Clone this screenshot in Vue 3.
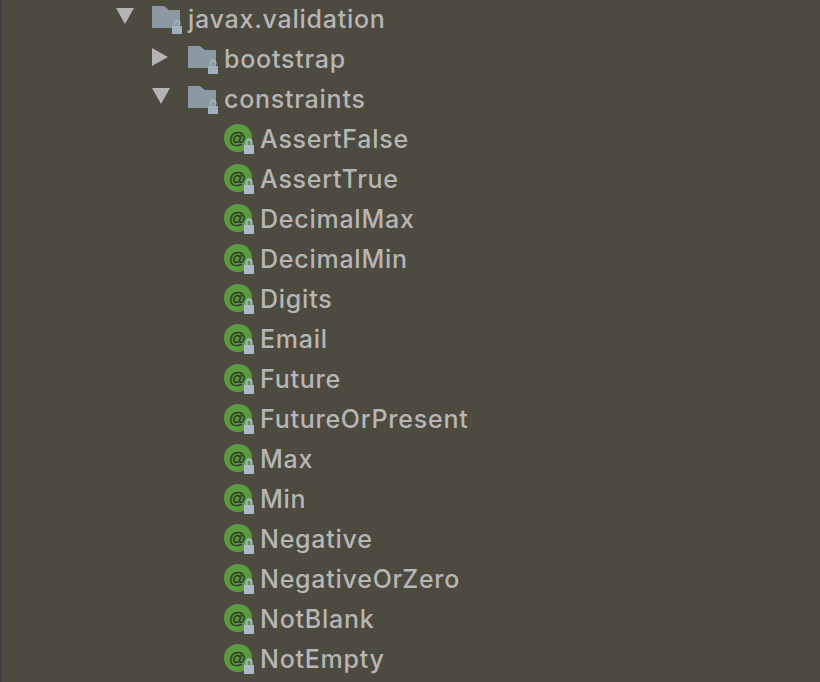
<template>
  <div class="tree">
    <div v-for="row in rows" :key="row.name" class="row" :class="`depth-${row.depth}`">
      <span v-if="row.arrow" class="arrow" :class="row.arrow"></span>
      <span v-if="row.folder" class="icon">
        <svg width="32" height="32" viewBox="0 0 32 32">
          <path d="M0 2h12l5 4h11v18H0z" fill="#8c99a2" />
          <path d="M22.5 21v-2a2.5 2.5 0 0 1 5 0v2" fill="none" stroke="#9fb0bd" stroke-width="2" />
          <rect x="20" y="22" width="10" height="8" fill="#9fb0bd" />
        </svg>
      </span>
      <span v-else class="icon">
        <svg width="32" height="32" viewBox="0 0 32 32">
          <circle cx="14" cy="14" r="14" fill="#5c9a3e" />
          <text x="13.5" y="19.5" text-anchor="middle" class="at">@</text>
          <path d="M22.5 21v-3a2.5 2.5 0 0 1 5 0v3" fill="none" stroke="#a9b9c6" stroke-width="2" />
          <rect x="20" y="21" width="10" height="9" fill="#a9b9c6" />
        </svg>
      </span>
      <span class="label">{{ row.name }}</span>
    </div>
  </div>
</template>

<script setup>
const annotations = [
  'AssertFalse', 'AssertTrue', 'DecimalMax', 'DecimalMin', 'Digits', 'Email', 'Future',
  'FutureOrPresent', 'Max', 'Min', 'Negative', 'NegativeOrZero', 'NotBlank', 'NotEmpty'
]

const rows = [
  { name: 'javax.validation', depth: 0, arrow: 'down', folder: true },
  { name: 'bootstrap', depth: 1, arrow: 'right', folder: true },
  { name: 'constraints', depth: 1, arrow: 'down', folder: true },
  ...annotations.map((name) => ({ name, depth: 2 }))
]
</script>

<style>
html,
body {
  margin: 0;
  background: #4d4a3f;
  overflow: hidden;
}
</style>

<style scoped>
.tree {
  width: 820px;
  height: 683px;
  margin-top: -1px;
  overflow: hidden;
  background: linear-gradient(to right, #3d3e42 2px, #4d4a3f 2px);
  font-family: "Inter", "Liberation Sans", sans-serif;
  font-size: 25px;
  font-weight: 500;
  letter-spacing: 0.75px;
  color: #b6b6b6;
}

.row {
  height: 40px;
  display: flex;
  align-items: center;
  position: relative;
}

.depth-0 {
  padding-left: 152px;
}

.depth-1 {
  padding-left: 188px;
}

.depth-2 {
  padding-left: 224px;
}

.arrow {
  position: absolute;
  width: 0;
  height: 0;
  margin-left: -36px;
}

.arrow.down {
  transform: translateY(-3px);
  border-left: 9px solid transparent;
  border-right: 9px solid transparent;
  border-top: 16px solid #b4b4b4;
}

.arrow.right {
  transform: translateY(-2px);
  border-top: 9px solid transparent;
  border-bottom: 9px solid transparent;
  border-left: 16px solid #b4b4b4;
}

.icon {
  width: 36px;
  height: 30px;
  flex: none;
}

.icon svg {
  display: block;
  overflow: visible;
}

.at {
  font-family: "Liberation Sans", sans-serif;
  font-size: 17px;
  font-weight: 400;
  letter-spacing: 0;
  fill: #2f3b26;
  stroke: #2f3b26;
  stroke-width: 0.35px;
}
</style>
